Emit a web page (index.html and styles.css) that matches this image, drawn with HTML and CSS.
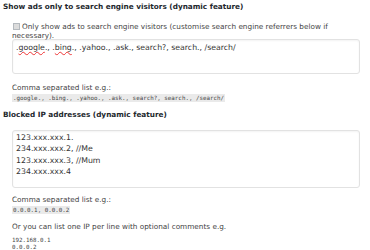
FILE: index.html
```html
<!DOCTYPE html>
<html lang="en">
  <head>
    <meta charset="UTF-8" />
    <title>Ad settings</title>
    <link rel="stylesheet" href="styles.css">
  </head>
  <body>
    <div class="section">
      <h3>Show ads only to search engine visitors (dynamic feature)</h3>
      <div class="field">
        <label class="check">
          <span class="box"></span>Only show ads to search engine visitors (customise search engine referrers below if necessary).
        </label>
        <div class="textarea short">.<span class="typo">google</span>., .<span class="typo">bing</span>., .yahoo., .ask., search?, search., /search/</div>
        <p class="hint">Comma separated list e.g.:<br><code>.google., .bing., .yahoo., .ask., search?, search., /search/</code></p>
      </div>
    </div>

    <div class="section">
      <h3>Blocked IP addresses (dynamic feature)</h3>
      <div class="field">
        <div class="textarea tall">123.xxx.xxx.1.<br>234.xxx.xxx.2, //Me<br>123.xxx.xxx.3, //Mum<br>234.xxx.xxx.4</div>
        <p class="hint first">Comma separated list e.g.:<br><code>0.0.0.1, 0.0.0.2</code></p>
        <p class="hint last">Or you can list one IP per line with optional comments e.g.</p>
        <pre class="sample">192.168.0.1
0.0.0.2</pre>
      </div>
    </div>
  </body>
</html>
```

FILE: styles.css
```css
body {
  font-family: "DejaVu Sans", Verdana, sans-serif;
  font-size: 7.3px;
  line-height: 10px;
  color: #444;
  margin: 0;
  padding: 1px 10px 0 3px;
  background: #fff;
}
h3 {
  font-size: 7.3px;
  line-height: 12px;
  font-weight: bold;
  color: #23282d;
  margin: 0 0 8.5px;
}
.section {
  margin-bottom: 6.5px;
}
.field {
  padding-left: 9px;
}
.check {
  display: block;
  line-height: 9.5px;
  margin-bottom: -1.5px;
}
.box {
  display: inline-block;
  box-sizing: border-box;
  width: 7px;
  height: 7px;
  border: 1px solid #b4b9be;
  background: #dcdcdc;
  vertical-align: -1px;
  margin: 0 2px 0 1px;
}
.textarea {
  box-sizing: border-box;
  border: 1px solid #e2e2e2;
  border-radius: 3px;
  padding: 1.5px 3px;
  font-size: 7.8px;
  line-height: 11.3px;
  color: #333;
  box-shadow: inset 0 1px 2px rgba(0, 0, 0, 0.05);
}
.short {
  height: 35px;
}
.tall {
  height: 58px;
}
.typo {
  text-decoration: underline wavy #e33;
  text-decoration-thickness: 1px;
  text-decoration-skip-ink: none;
}
.hint {
  margin: 8.5px 0 0;
}
.hint.first {
  margin-top: 7px;
}
.hint.last {
  margin-top: 7.5px;
}
code,
.sample {
  font-family: "DejaVu Sans Mono", monospace;
  font-size: 5.85px;
  color: #444;
}
code {
  background: #eaeaea;
  padding: 1px 1px;
}
.sample {
  margin: 4.5px 0 0;
  font-size: 5.8px;
  line-height: 7px;
}
```
